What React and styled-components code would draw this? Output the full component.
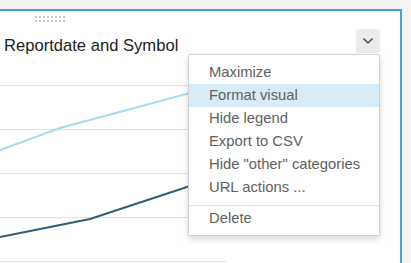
import React from "react";
import styled, { createGlobalStyle } from "styled-components";

const GlobalStyle = createGlobalStyle`
  html, body {
    margin: 0;
    padding: 0;
    background: #f3f3f3;
    overflow: hidden;
  }
  body {
    font-family: "Liberation Sans", Arial, sans-serif;
  }
`;

const Page = styled.div`
  width: 411px;
  height: 263px;
  padding: 9px 9px 0 0;
  box-sizing: border-box;
`;

const Card = styled.div`
  position: relative;
  height: 254px;
  background: #ffffff;
  border-top: 2px solid #3ba3e3;
  border-right: 2px solid #3ba3e3;
  overflow: hidden;
`;

const Handle = styled.div`
  display: grid;
  grid-template-columns: repeat(8, 2px);
  grid-auto-rows: 2px;
  gap: 2px;
  padding: 5px 0 0 35px;
`;

const Dot = styled.span`
  background: #c8c8c8;
`;

const Header = styled.div`
  display: flex;
  justify-content: space-between;
  align-items: flex-start;
  height: 24px;
  padding: 7px 20px 0 4px;
`;

const Title = styled.h2`
  margin: 5px 0 0;
  font-size: 16.6px;
  line-height: 24px;
  font-weight: 400;
  color: #222222;
  white-space: nowrap;
`;

const MenuButton = styled.button`
  width: 24px;
  height: 24px;
  padding: 0;
  display: flex;
  align-items: center;
  justify-content: center;
  background: #ebebeb;
  border: none;
  border-radius: 3px;
`;

const Chart = styled.svg`
  display: block;
`;

const Menu = styled.ul`
  position: absolute;
  top: 43px;
  right: 20px;
  width: 192px;
  margin: 0;
  padding: 6px 0 5px;
  list-style: none;
  background: #ffffff;
  border: 1px solid #d2d2d2;
  border-radius: 2px;
  box-shadow: 0 3px 6px rgba(0, 0, 0, 0.16);
  box-sizing: border-box;
`;

const Item = styled.li`
  height: 23px;
  line-height: 23px;
  padding-left: 20px;
  font-size: 14.8px;
  color: #606060;
  white-space: nowrap;
  background: ${(p) => (p.$active ? "#d9ebf7" : "transparent")};
`;

const Divider = styled.li`
  height: 1px;
  margin: 6px 0 1px;
  background: #e4e4e4;
`;

const items = [
  "Maximize",
  "Format visual",
  "Hide legend",
  "Export to CSV",
  'Hide "other" categories',
  "URL actions ...",
];

const gridY = [85, 129, 173, 217];

export default function App() {
  return (
    <Page>
      <GlobalStyle />
      <Card>
        <Handle>
          {Array.from({ length: 16 }).map((_, i) => (
            <Dot key={i} />
          ))}
        </Handle>
        <Header>
          <Title>Reportdate and Symbol</Title>
          <MenuButton>
            <svg width="12" height="8" viewBox="0 0 12 8">
              <path d="M1.5 1.5 L6 6 L10.5 1.5" fill="none" stroke="#333" strokeWidth="1.2" />
            </svg>
          </MenuButton>
        </Header>
        <Chart width="400" height="210" viewBox="0 53 400 210">
          {gridY.map((y) => (
            <line key={y} x1="0" x2="360" y1={y + 0.5} y2={y + 0.5} stroke="#e2e2e2" strokeWidth="1" />
          ))}
          <line x1="0" x2="226" y1="261.5" y2="261.5" stroke="#e2e2e2" strokeWidth="1" />
          <polyline points="0,150 60,128 190,93" fill="none" stroke="#a3dcf1" strokeWidth="2" />
          <polyline points="0,237 90,219 190,186" fill="none" stroke="#2d5e7c" strokeWidth="2" />
        </Chart>
        <Menu>
          {items.map((t) => (
            <Item key={t} $active={t === "Format visual"}>
              {t}
            </Item>
          ))}
          <Divider />
          <Item>Delete</Item>
        </Menu>
      </Card>
    </Page>
  );
}
